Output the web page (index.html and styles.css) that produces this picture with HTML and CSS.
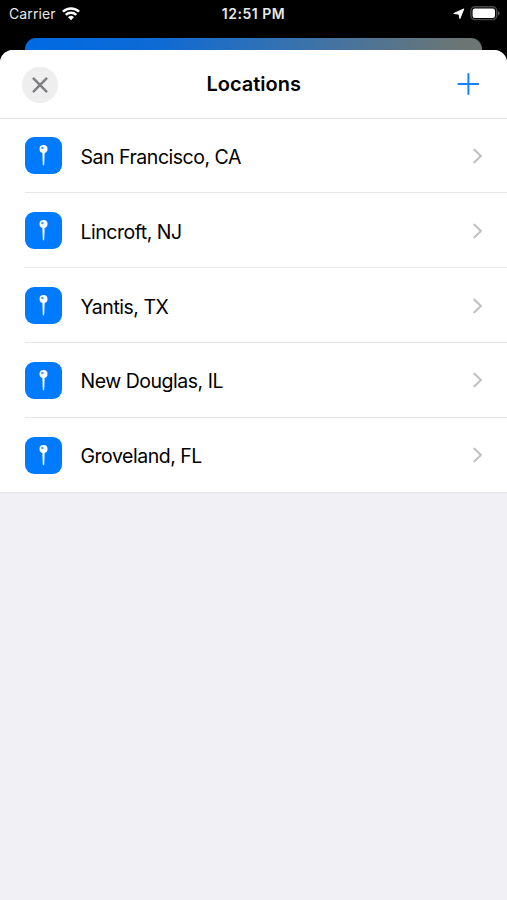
FILE: index.html
```
<!DOCTYPE html>
<html lang="en">
  <head>
    <meta charset="UTF-8" />
    <meta name="viewport" content="width=device-width, initial-scale=1.0" />
    <title>Locations</title>
    <link rel="stylesheet" href="styles.css">
  </head>
  <body>
    <!-- shared icons -->
    <svg class="sprite" width="0" height="0">
      <symbol id="pin" viewBox="0 0 37 37">
        <path d="M17.3 14.5h2.4l-.5 13q-.7 1.8-1.4 0z" fill="#fff" />
        <circle cx="18.5" cy="12" r="4" fill="#fff" />
        <circle cx="17.4" cy="11" r="1.3" fill="#4ba0ff" />
      </symbol>
      <symbol id="chevron" viewBox="0 0 10 16">
        <path d="M1.4 1.7l6.5 6.3-6.5 6.3" fill="none" stroke="#c2c2c5" stroke-width="2.2" stroke-linecap="round" stroke-linejoin="round" />
      </symbol>
    </svg>

    <div class="status-bar">
      <div class="carrier">
        <span>Carrier</span>
        <svg width="18" height="14" viewBox="0 0 18 14">
          <g fill="none" stroke="#fff" stroke-width="2.5">
            <path d="M.9 4.7a11.6 11.6 0 0 1 16.2 0" />
            <path d="M3.8 7.9a7.4 7.4 0 0 1 10.4 0" />
          </g>
          <path d="M9 13.3L6.1 10.3a4.1 4.1 0 0 1 5.8 0z" fill="#fff" />
        </svg>
      </div>
      <div class="time">12:51 PM</div>
      <div class="indicators">
        <svg width="12" height="12" viewBox="0 0 12 12">
          <path d="M10.8.9L6.9 10.5 6 6.1.8 5.5z" fill="#fff" stroke="#fff" stroke-width="1" stroke-linejoin="round" />
        </svg>
        <svg width="31" height="15" viewBox="0 0 31 15">
          <rect x=".9" y=".8" width="25.8" height="12.8" rx="4" fill="none" stroke="#4b4b4e" stroke-width="1.4" />
          <rect x="2.6" y="2.5" width="22.4" height="9.4" rx="2.2" fill="#fff" />
          <path d="M28 4.9q3.2 2.3 0 4.6z" fill="#626265" />
        </svg>
      </div>
    </div>

    <div class="back-card"></div>

    <div class="sheet">
      <div class="header">
        <button class="close" aria-label="Close">
          <svg width="16" height="16" viewBox="0 0 16 16">
            <path d="M1.7 1.7l12.6 12.6M14.3 1.7L1.7 14.3" stroke="#7f7f83" stroke-width="2.5" stroke-linecap="round" />
          </svg>
        </button>
        <h1>Locations</h1>
        <button class="add" aria-label="Add">
          <svg width="22" height="22" viewBox="0 0 22 22">
            <path d="M11.4 1v20M1.4 11h20" stroke="#1682fa" stroke-width="2" stroke-linecap="round" />
          </svg>
        </button>
      </div>

      <ul class="locations">
        <li class="location">
          <svg class="tile"><use href="#pin" /></svg>
          <span class="name">San Francisco, CA</span>
          <svg class="chevron"><use href="#chevron" /></svg>
        </li>
        <li class="location">
          <svg class="tile"><use href="#pin" /></svg>
          <span class="name">Lincroft, NJ</span>
          <svg class="chevron"><use href="#chevron" /></svg>
        </li>
        <li class="location">
          <svg class="tile"><use href="#pin" /></svg>
          <span class="name">Yantis, TX</span>
          <svg class="chevron"><use href="#chevron" /></svg>
        </li>
        <li class="location">
          <svg class="tile"><use href="#pin" /></svg>
          <span class="name">New Douglas, IL</span>
          <svg class="chevron"><use href="#chevron" /></svg>
        </li>
        <li class="location">
          <svg class="tile"><use href="#pin" /></svg>
          <span class="name">Groveland, FL</span>
          <svg class="chevron"><use href="#chevron" /></svg>
        </li>
      </ul>
    </div>
  </body>
</html>
```

FILE: styles.css
```
* {
  box-sizing: border-box;
}

body {
  margin: 0;
  height: 100vh;
  display: flex;
  flex-direction: column;
  overflow: hidden;
  background-color: #000;
  color: #000;
  font-family: Inter, "Liberation Sans", sans-serif;
}

.sprite {
  display: none;
}

.status-bar {
  display: grid;
  grid-template-columns: 1fr auto 1fr;
  align-items: center;
  height: 38px;
  padding: 0 6px 11px 9px;
  color: #e8e8e8;
  font-size: 14px;
}

.carrier {
  display: flex;
  align-items: center;
  gap: 6px;
  letter-spacing: 0.1px;
}

.time {
  margin-right: 3px;
  font-weight: 600;
  letter-spacing: 0.5px;
}

.indicators {
  display: flex;
  align-items: center;
  justify-content: flex-end;
  gap: 5px;
}

.back-card {
  height: 12px;
  margin: 0 25px;
  border-radius: 11px 11px 0 0;
  background: linear-gradient(to right, #006ae4, #0e6ad5 28%, #3972ad 60%, #6b7674 95%);
}

.sheet {
  flex: 1;
  border-radius: 13px 13px 0 0;
  background-color: #f0f0f5;
  overflow: hidden;
}

.header {
  display: grid;
  grid-template-columns: 36px 1fr 37px;
  align-items: center;
  height: 68.6px;
  padding: 0 20.5px 0 22px;
  border-bottom: 1px solid #e7e7e9;
  background-color: #fff;
}

.header h1 {
  margin: 0;
  font-size: 20px;
  font-weight: 600;
  text-align: center;
}

.header button {
  display: flex;
  align-items: center;
  justify-content: center;
  width: 36px;
  height: 36px;
  padding: 0;
  border: none;
  background: none;
  cursor: pointer;
}

.header .close {
  margin-top: 2px;
  border-radius: 50%;
  background-color: #eeeeef;
}

.locations {
  margin: 0;
  padding: 0 0 0 25px;
  list-style: none;
  background-color: #fff;
  border-bottom: 1px solid #e0e0e4;
}

.location {
  display: flex;
  align-items: center;
  height: 74.8px;
  padding: 1px 24.5px 0 0;
  border-bottom: 1px solid #e7e7e9;
}

.location:last-child {
  height: 73.8px;
  border-bottom: none;
}

.tile {
  width: 37px;
  height: 37px;
  border-radius: 9px;
  background-color: #007aff;
}

.name {
  flex: 1;
  margin-left: 18.5px;
  padding-top: 2px;
  font-size: 19.5px;
  letter-spacing: -0.48px;
}

.chevron {
  width: 10px;
  height: 16px;
}
```
